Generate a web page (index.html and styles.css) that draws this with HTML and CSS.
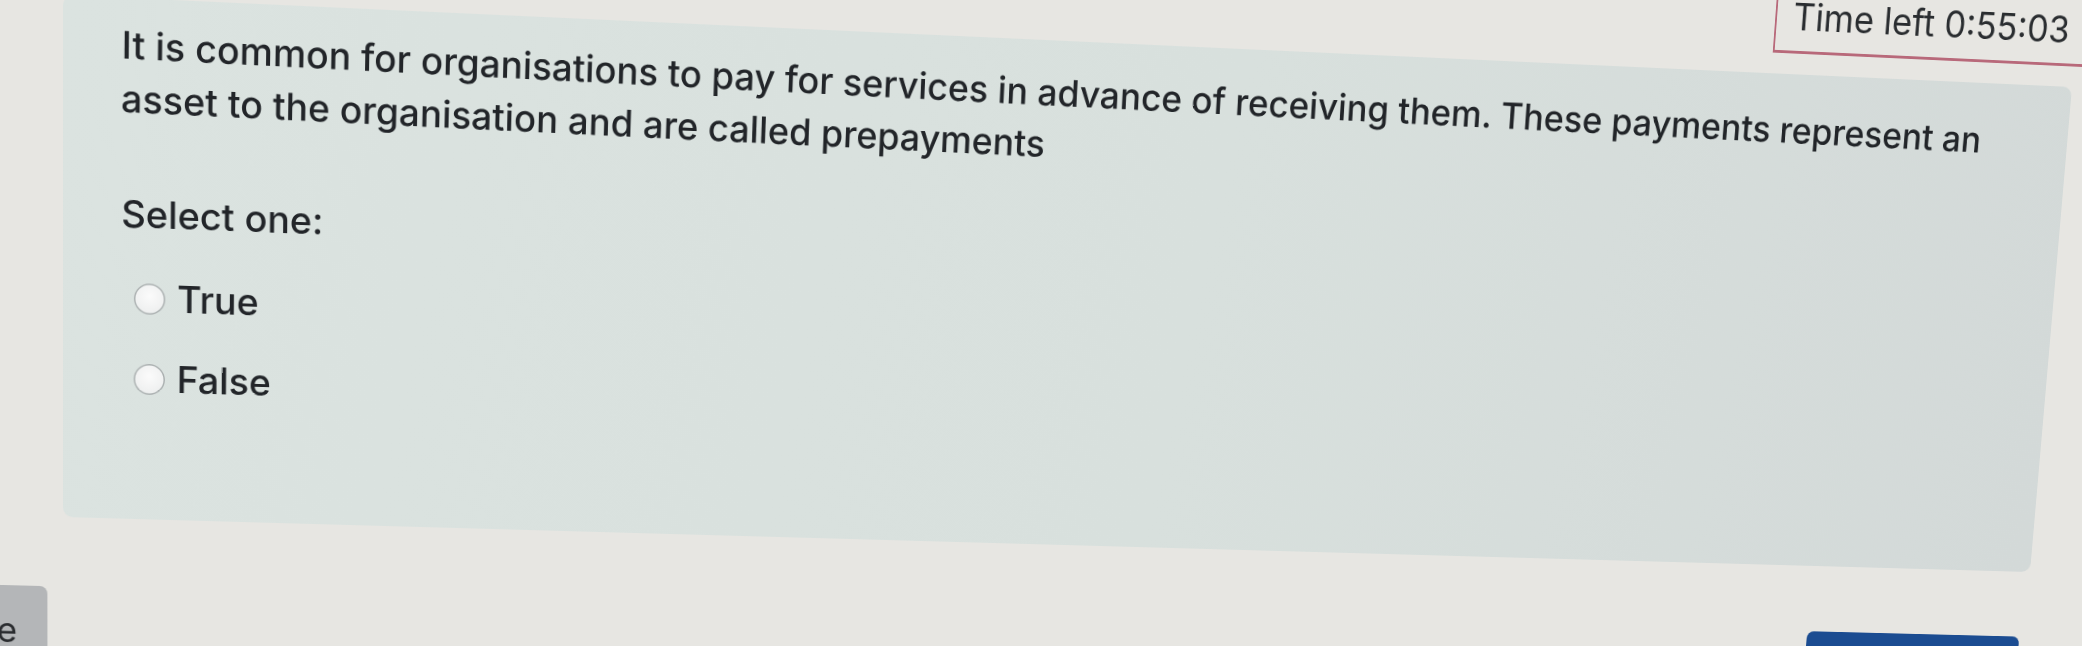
FILE: index.html
```html
<!DOCTYPE html>
<html lang="en">
<head>
<meta charset="utf-8">
<title>Quiz question</title>
<link rel="stylesheet" href="styles.css">
</head>
<body>
<div class="screen">
  <div class="top">
    <div class="timer">Time left 0:55:03</div>
  </div>
  <div class="formulation">
    <div class="qtext">It is common for organisations to pay for services in advance of receiving them. These payments represent an asset to the organisation and are called prepayments</div>
    <div class="prompt">Select one:</div>
    <div class="answer">
      <label class="option"><span class="radio"></span><span class="label">True</span></label>
      <label class="option"><span class="radio"></span><span class="label">False</span></label>
    </div>
  </div>
  <div class="footer">
    <button class="btn btn-secondary">Previous page</button>
    <button class="btn btn-primary">Next page</button>
  </div>
</div>
</body>
</html>
```
FILE: styles.css
```css
html, body {
  margin: 0;
  height: 100%;
  overflow: hidden;
  background: #e7e6e2;
}
body {
  font-family: Inter, "Liberation Sans", sans-serif;
  color: #222529;
}
.screen {
  width: 2157px;
  padding-left: 100px;
  transform-origin: 0 0;
  transform: matrix3d(1.002174, 0.045624, 0, 0.000034163, 0.002704, 0.999725, 0, 0.000042933, 0, 0, 1, 0, -37.515, -119.532, 0, 0.991861);
}
.top {
  display: flex;
  justify-content: flex-end;
  height: 88px;
  margin-bottom: 22px;
}
.timer {
  box-sizing: border-box;
  width: 450px;
  height: 88px;
  margin-right: -107px;
  padding: 23px 0 13px 18px;
  border: 2px solid #b8697a;
  border-bottom-width: 3px;
  font-size: 39px;
  line-height: 48px;
  white-space: nowrap;
  color: #2a2d30;
}
.formulation {
  box-sizing: border-box;
  height: 534px;
  padding: 20.4px 60px 0 59px;
  background: linear-gradient(100deg, #dbe3e0 0%, #d8e0dd 55%, #d3d9d8 100%);
  border-radius: 10px;
}
.qtext {
  font-size: 38.1px;
  font-weight: 500;
  line-height: 54px;
  transform: rotate(0.4deg);
  transform-origin: 0 0;
}
.prompt {
  margin-top: 61.8px;
  font-size: 38.5px;
  font-weight: 500;
  line-height: 57.6px;
}
.answer {
  display: flex;
  flex-direction: column;
  gap: 25.4px;
  margin-top: 28.4px;
}
.option {
  display: flex;
  align-items: center;
  height: 57.6px;
  font-size: 38.5px;
  font-weight: 500;
  line-height: 57.6px;
}
.radio {
  width: 32px;
  height: 32px;
  border-radius: 50%;
  margin-left: 12.5px;
  margin-right: 12.5px;
  background: radial-gradient(circle at 50% 40%, #fbfbfb 0%, #f0f1f1 60%, #e2e5e5 100%);
  box-shadow: inset 0 0 0 1.5px #aab0b0;
}
.footer {
  display: flex;
  justify-content: space-between;
  margin: 73px 6px 0 -346px;
}
.btn {
  box-sizing: border-box;
  font-family: inherit;
  font-size: 36px;
  line-height: 40px;
  height: 80px;
  padding: 25px 31px 11px;
  border: none;
  border-radius: 8px;
  white-space: nowrap;
}
.btn-secondary {
  width: 330px;
  text-align: right;
  background: #b4b6b8;
  color: #2a2c2f;
}
.btn-primary {
  width: 248px;
  background: #1b4c91;
  color: #ffffff;
}
```
